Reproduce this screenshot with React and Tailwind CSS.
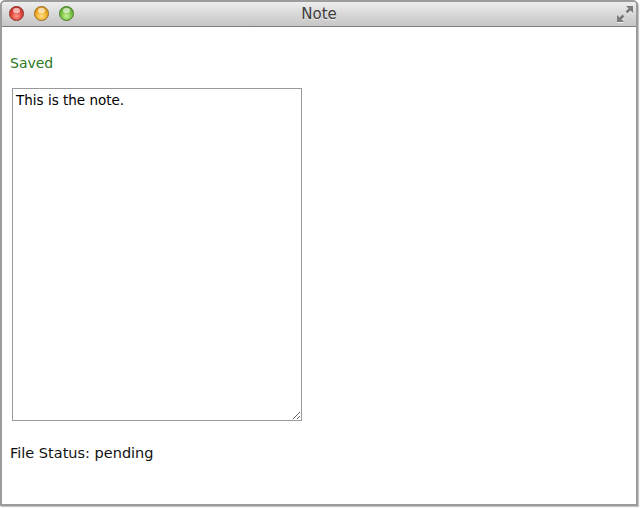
import React from "react";

const font = { fontFamily: '"DejaVu Sans", "Liberation Sans", sans-serif' };

const Light = ({ tone }) => {
  const tones = {
    red: "bg-[radial-gradient(circle_at_50%_70%,#ff9c8f_0%,#e2483c_45%,#b8261d_100%)] border-[#8f2a22]",
    yellow: "bg-[radial-gradient(circle_at_50%_70%,#ffe08a_0%,#f1b02c_45%,#c9851a_100%)] border-[#9a6a1a]",
    green: "bg-[radial-gradient(circle_at_50%_70%,#c8f29a_0%,#7cc445_45%,#4f9626_100%)] border-[#4a7a2a]",
  };
  return (
    <span className={`relative block h-[15px] w-[15px] rounded-full border ${tones[tone]}`}>
      <span className="absolute left-[3px] top-[1px] h-[5px] w-[7px] rounded-full bg-white/60" />
    </span>
  );
};

const FullscreenIcon = () => (
  <svg width="18" height="18" viewBox="0 0 18 18" className="block">
    <g fill="#ffffff" opacity="0.7" transform="translate(0 1)">
      <path d="M10 1h7v7l-2.5-2.5-3 3-2-2 3-3z" />
      <path d="M8 17H1v-7l2.5 2.5 3-3 2 2-3 3z" />
    </g>
    <g fill="#7a7a7a">
      <path d="M10 1h7v7l-2.5-2.5-3 3-2-2 3-3z" />
      <path d="M8 17H1v-7l2.5 2.5 3-3 2 2-3 3z" />
    </g>
  </svg>
);

export default function App() {
  return (
    <div className="h-[508px] w-[640px] bg-white" style={font}>
      <div className="flex h-[506px] w-[638px] flex-col overflow-hidden rounded-t-[5px] border-2 border-[#9c9c9c] bg-white shadow-[1px_1px_1px_rgba(0,0,0,0.25)]">
        <header className="relative flex h-[25px] shrink-0 items-center border-b border-[#7e7e7e] bg-[linear-gradient(#eeeeee,#d6d6d6_55%,#c6c6c6)] pb-[1px] pl-[7px]">
          <div className="flex items-center gap-[10px]">
            <Light tone="red" />
            <Light tone="yellow" />
            <Light tone="green" />
          </div>
          <div className="absolute inset-0 flex items-center justify-center">
            <span className="text-[15px] leading-none text-[#3c3c3c] [text-shadow:0_1px_0_rgba(255,255,255,0.6)]">
              Note
            </span>
          </div>
          <div className="ml-auto mr-[2px]">
            <FullscreenIcon />
          </div>
        </header>

        <main className="flex flex-col items-start pl-[8px] pt-[27px]">
          <p className="text-[14px] leading-[18px] text-[#2c7a22]">Saved</p>
          <textarea
            defaultValue="This is the note."
            className="ml-[2px] mt-[16px] h-[333px] w-[290px] resize border border-[#9a9a9a] p-[3px] text-[13.5px] leading-[16px] text-black outline-none"
            style={font}
          />
          <p className="mt-[23px] text-[14.5px] leading-[18px] text-[#111111]">File Status: pending</p>
        </main>
      </div>
    </div>
  );
}
